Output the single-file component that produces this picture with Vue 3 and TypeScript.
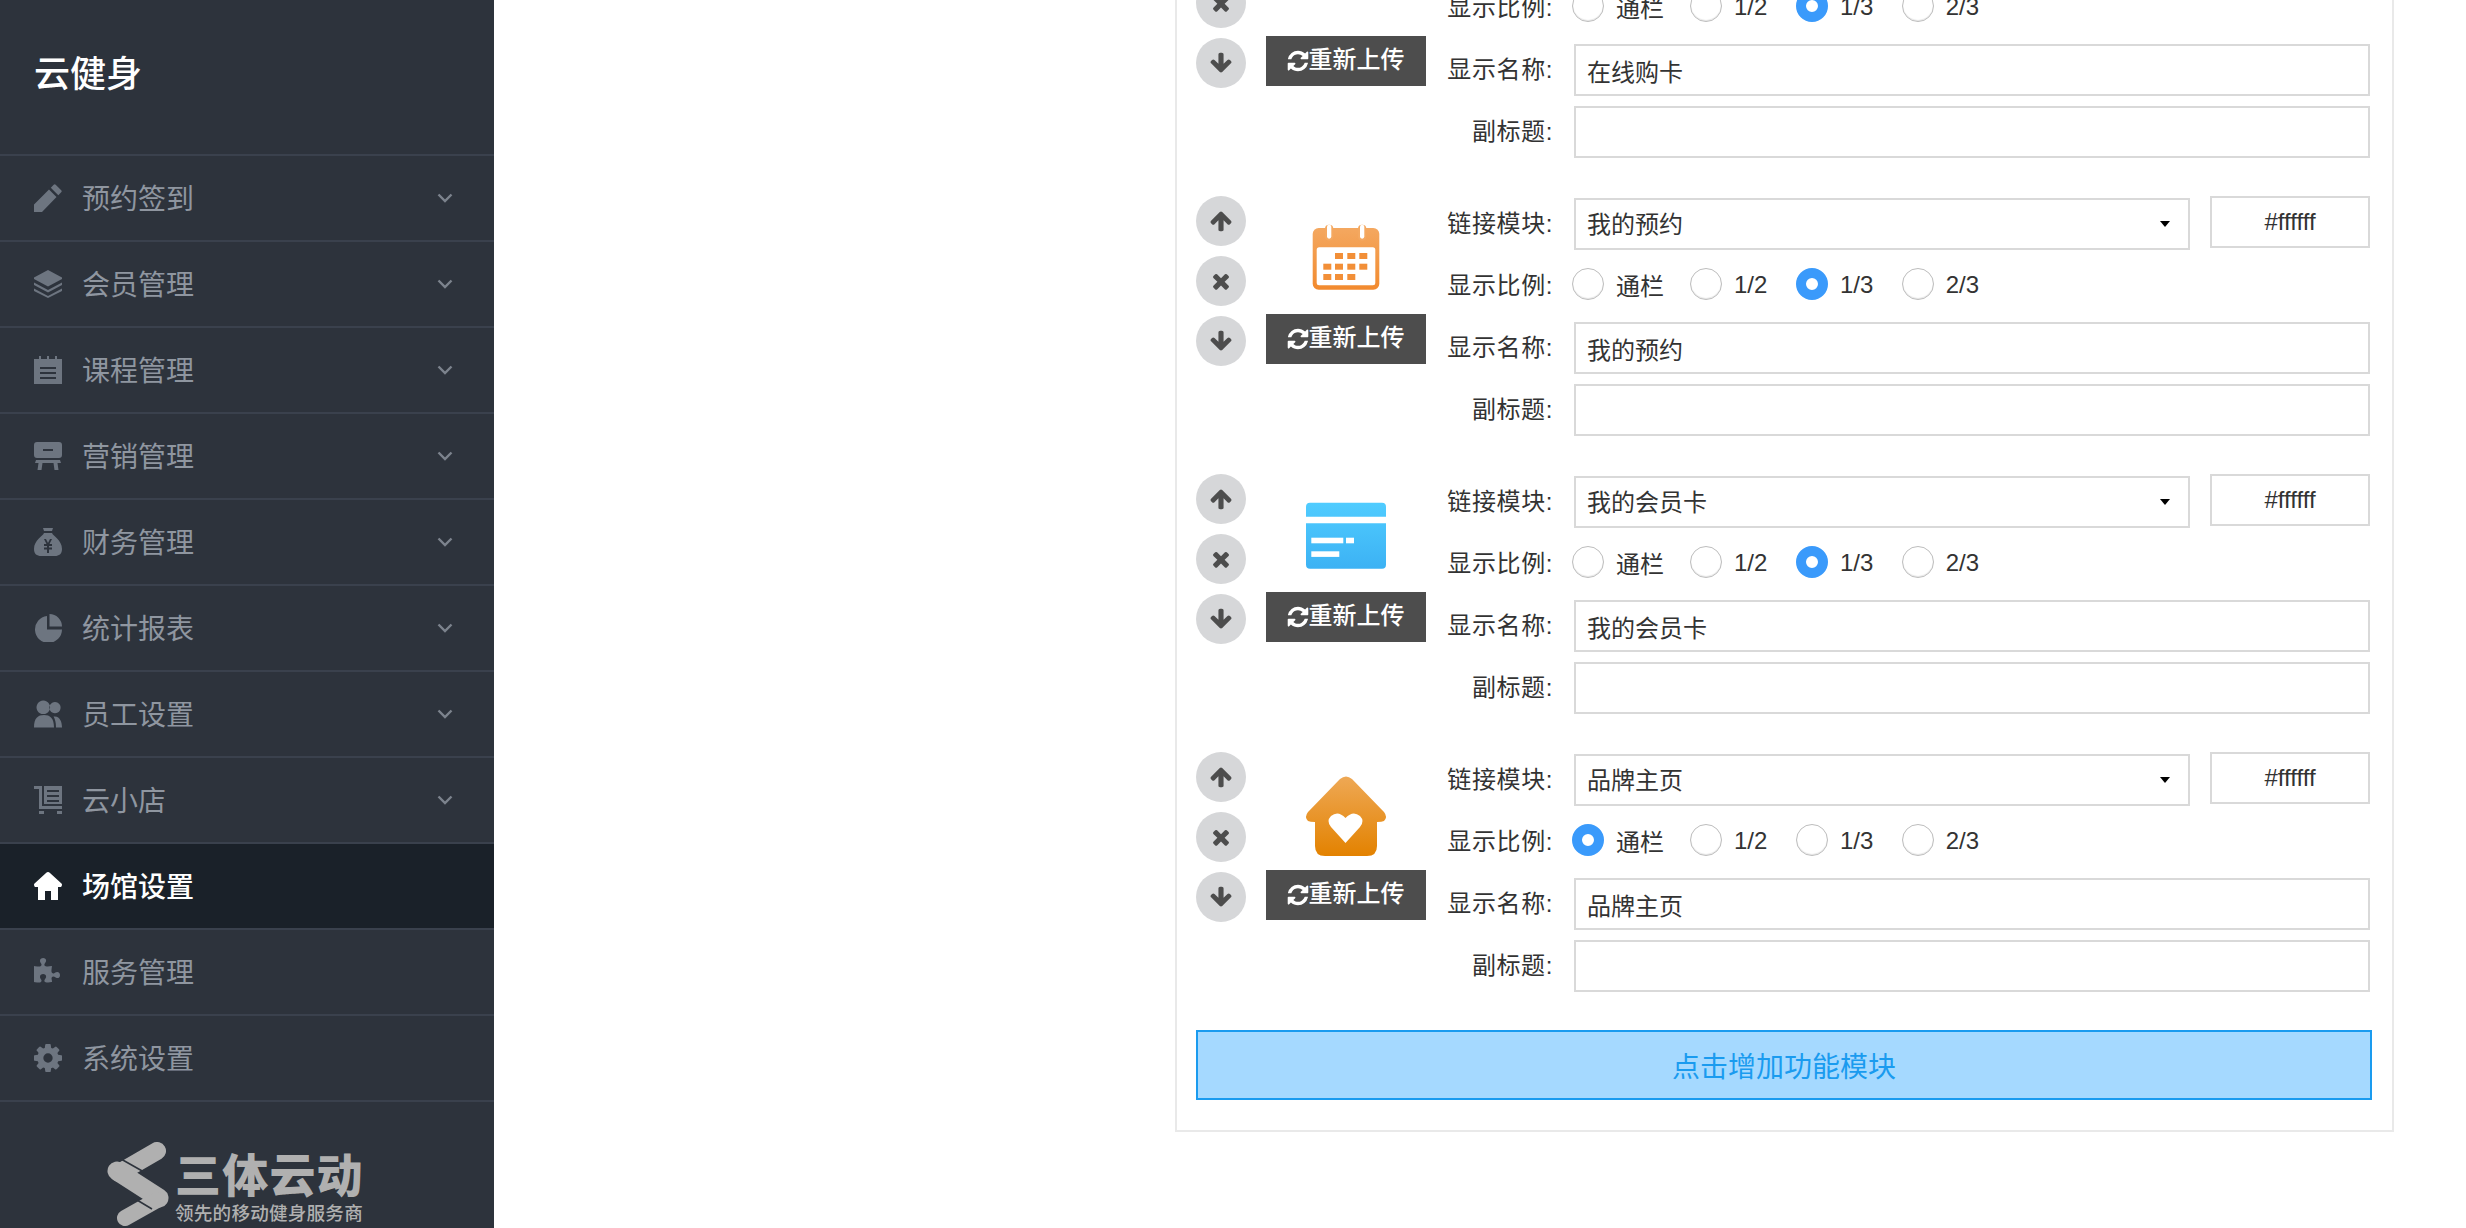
<script setup lang="ts">
interface MenuItem {
  label: string
  d: string
  box?: string
  active?: boolean
  noArrow?: boolean
}
interface ModuleRow {
  id: number
  icon: 'tablet' | 'calendar' | 'card' | 'home'
  link: string
  ratio: string
  name: string
}

const FA = '0 0 1792 1792'
const menu: MenuItem[] = [
  { label: '预约签到', d: 'M0 28V20.5L15 5.5l7.5 7.5L8 28ZM16.8 3.7l2.9-2.9q1-1 2 0l5.5 5.5q1 1 0 2l-2.9 2.9Z' },
  { label: '会员管理', d: 'M14 0L28 7.5V9L14 16.5 0 9V7.5ZM0 12.5l14 7.5 14-7.5V15L14 22.5 0 15ZM0 18.5l14 7.5 14-7.5V21L14 28 0 21Z' },
  { label: '课程管理', d: 'M0 3H5V0H7V3H13V0H15V3H21V0H23V3H28V28H0ZM6 11V13H22V11ZM6 16V18H22V16ZM6 21V23H22V21Z' },
  { label: '营销管理', d: 'M3 0H25Q28 0 28 3V13Q28 16 25 16H3Q0 16 0 13V3Q0 0 3 0ZM9 7V9H19V7ZM2 18H26L27 21H23.5L24.5 28H20.5L19.5 21H8.5L7.5 28H3.5L4.5 21H1Z' },
  { label: '财务管理', d: 'M9 0H19L18 3H10ZM10 5H18C19 8 28 12 28 21C28 26 25 28 21 28H7C3 28 0 26 0 21C0 12 9 8 10 5ZM10 11L12.5 16H10V18H13V19.5H10V21.5H13V25H15V21.5H18V19.5H15V18H18V16H15.5L18 11H16L14 15 12 11Z' },
  { label: '统计报表', d: 'M13 2A13.5 13.5 0 1 0 28 15.5H13ZM15.5 0A12.5 12.5 0 0 1 28 12.5H15.5Z' },
  { label: '员工设置', d: 'M9.3 0.5a6.8 6.8 0 1 1-.01 0ZM21 2a5.6 5.6 0 1 1-.01 0ZM0 27.5C0 18 4 15 10 15C16 15 20 18 20 27.5ZM22 27.5C22 22 21 19 19.5 16.5C26 15.5 28 22 28 27.5Z' },
  { label: '云小店', d: 'M0 0H8V20H28V23H5V3H0ZM10 0H28V18H10ZM13 4V6H25V4ZM13 9V11H25V9ZM13 14V16H25V14ZM5 25H10V28H5ZM23 25H28V28H23Z' },
  { label: '场馆设置', active: true, noArrow: true, d: 'M14 0Q15 0 16 1L28 12Q28 15 27 15H24V28H17V19H11V28H4V15H1Q0 15 0 12L12 1Q13 0 14 0Z' },
  { label: '服务管理', noArrow: true, box: '0 128 1792 1536', d: 'M1664 1098q0 81-44.5 135t-123.5 54q-41 0-77.5-17.5t-59-38-56.5-38-71-17.5q-110 0-110 124 0 39 16 115t15 115v5q-22 0-33 1-34 3-97.5 11.5t-115.5 13.5-98 5q-61 0-103-26.5t-42-83.5q0-37 17.5-71t38-56.5 38-59 17.5-77.5q0-79-54-123.5t-135-44.5q-84 0-143 45.5t-59 127.5q0 43 15 83t33.5 64.5 33.5 53 15 50.5q0 45-46 89-37 35-117 35-95 0-245-24-9-2-27.5-4t-27.5-4l-13-2q-1 0-3-1-2 0-2-1v-1024q2 1 17.5 3.5t34 5 21.5 3.5q150 24 245 24 80 0 117-35 46-44 46-89 0-22-15-50.5t-33.5-53-33.5-64.5-15-83q0-82 59-127.5t144-45.5q80 0 134 44.5t54 123.5q0 41-17.5 77.5t-38 59-38 56.5-17.5 71q0 57 42 83.5t103 26.5q64 0 180-15t163-17v2q-1 2-3.5 17.5t-5 34-3.5 21.5q-24 150-24 245 0 80 35 117 44 46 89 46 22 0 50.5-15t53-33.5 64.5-33.5 83-15q82 0 127.5 59t45.5 143z' },
  { label: '系统设置', noArrow: true, box: '128 128 1536 1536', d: 'M1152 896q0-106-75-181t-181-75-181 75-75 181 75 181 181 75 181-75 75-181zm512-109v222q0 12-8 23t-20 13l-185 28q-19 54-39 91 35 50 107 138 10 12 10 25t-9 23q-27 37-99 108t-94 71q-12 0-26-9l-138-108q-44 23-91 38-16 136-29 186-7 28-36 28h-222q-14 0-24.5-8.5t-11.5-21.5l-28-184q-49-16-90-37l-141 107q-10 9-25 9-14 0-25-11-126-114-165-168-7-10-7-23 0-12 8-23 15-21 51-66.5t54-70.5q-27-50-41-99l-183-27q-13-2-21-12.5t-8-23.5v-222q0-12 8-23t19-13l186-28q14-46 39-92-40-57-107-138-10-12-10-24 0-10 9-23 26-36 98.5-107.5t94.5-71.5q13 0 26 10l138 107q44-23 91-38 16-136 29-186 7-28 36-28h222q14 0 24.5 8.5t11.5 21.5l28 184q49 16 90 37l142-107q9-9 24-9 13 0 25 10 129 119 165 170 7 8 7 22 0 12-8 23-15 21-51 66.5t-54 70.5q26 50 41 98l183 28q13 2 21 12.5t8 23.5z' }
]

const ratios = ['通栏', '1/2', '1/3', '2/3']
const links = ['在线购卡', '我的预约', '我的会员卡', '品牌主页']
const rows: ModuleRow[] = [
  { id: 1, icon: 'tablet', link: '在线购卡', ratio: '1/3', name: '在线购卡' },
  { id: 2, icon: 'calendar', link: '我的预约', ratio: '1/3', name: '我的预约' },
  { id: 3, icon: 'card', link: '我的会员卡', ratio: '1/3', name: '我的会员卡' },
  { id: 4, icon: 'home', link: '品牌主页', ratio: '通栏', name: '品牌主页' }
]

const controls = [
  { key: 'up', d: 'M1675 971q0 51-37 90l-75 75q-38 38-91 38-54 0-90-38l-294-293v704q0 52-37.5 84.5t-90.5 32.5h-128q-53 0-90.5-32.5t-37.5-84.5v-704l-294 293q-36 38-90 38t-90-38l-75-75q-38-38-38-90 0-53 38-91l651-651q35-37 90-37 54 0 91 37l651 651q37 39 37 91z' },
  { key: 'del', d: 'M1490 1322q0 40-28 68l-136 136q-28 28-68 28t-68-28l-294-294-294 294q-28 28-68 28t-68-28l-136-136q-28-28-28-68t28-68l294-294-294-294q-28-28-28-68t28-68l136-136q28-28 68-28t68 28l294 294 294-294q28-28 68-28t68 28l136 136q28 28 28 68t-28 68l-294 294 294 294q28 28 28 68z' },
  { key: 'down', d: 'M1675 832q0 53-37 90l-651 652q-39 37-91 37-53 0-90-37l-651-652q-38-36-38-90 0-53 38-91l74-75q39-37 91-37 53 0 90 37l294 294v-704q0-52 38-90t90-38h128q52 0 90 38t38 90v704l294-294q37-37 90-37 52 0 91 37l75 75q37 39 37 91z' }
]
const refreshPath = 'M1639 1056q0 5-1 7-64 268-268 434.5t-478 166.5q-146 0-282.5-55t-243.5-157l-129 129q-19 19-45 19t-45-19-19-45v-448q0-26 19-45t45-19h448q26 0 45 19t19 45-19 45l-137 137q71 66 161 102t187 36q134 0 250-65t186-179q11-17 53-117 8-23 30-23h192q13 0 22.5 9.5t9.5 22.5zm25-800v448q0 26-19 45t-45 19h-448q-26 0-45-19t-19-45 19-45l138-138q-148-137-349-137-134 0-250 65t-186 179q-11 17-53 117-8 23-30 23h-199q-13 0-22.5-9.5t-9.5-22.5v-7q65-268 270-434.5t480-166.5q146 0 284 55.5t245 156.5l130-129q19-19 45-19t45 19 19 45z'

const calendarCells: [number, number][] = [
  [29, 33], [41.3, 33], [53.3, 33],
  [17.3, 43.7], [29, 43.7], [41.3, 43.7], [53.3, 43.7],
  [17.3, 54], [29, 54], [41.3, 54]
]
</script>

<template>
  <div class="page">
    <aside class="sidebar">
      <div class="brand">云健身</div>
      <nav class="menu">
        <a v-for="item in menu" :key="item.label" class="menu-item" :class="{ active: item.active }">
          <svg class="menu-icon" :viewBox="item.box || '0 0 28 28'">
            <path :d="item.d" fill-rule="evenodd" />
          </svg>
          <span class="menu-label">{{ item.label }}</span>
          <svg v-if="!item.noArrow" class="chevron" viewBox="0 0 16 10">
            <path d="M1.5 1.5L8 8l6.5-6.5" />
          </svg>
        </a>
      </nav>
      <div class="logo">
        <svg class="logo-mark" viewBox="0 0 64 84">
          <g fill="none" stroke="#b0b0b0" stroke-linecap="round">
            <path d="M51 9L13 31" stroke-width="18" />
            <path d="M11 29L53 56" stroke-width="19" />
            <path d="M51 58L19 76" stroke-width="16" />
          </g>
          <path d="M15 17L38 30M26 55L46 67" fill="none" stroke="#2d333c" stroke-width="1.6" />
        </svg>
        <div class="logo-text">
          <div class="logo-name">三体云动</div>
          <div class="logo-slogan">领先的移动健身服务商</div>
        </div>
      </div>
    </aside>

    <main class="main">
      <section class="card">
        <div v-for="row in rows" :key="row.id" class="module">
          <div class="controls">
            <button v-for="c in controls" :key="c.key" class="round-btn" type="button">
              <svg :viewBox="FA"><path :d="c.d" /></svg>
            </button>
          </div>

          <div class="media">
            <div class="thumb">
              <svg v-if="row.icon === 'tablet'" viewBox="0 0 80 80">
                <rect x="2" y="-30" width="54" height="52" rx="6" fill="#3fb8f5" />
                <rect x="8" y="-20" width="42" height="30" rx="1" fill="#fff" />
                <circle cx="29" cy="16" r="3.4" fill="#fff" />
              </svg>
              <svg v-else-if="row.icon === 'calendar'" viewBox="0 0 80 80">
                <defs>
                  <linearGradient id="calGrad" x1="0" y1="0" x2="0" y2="1">
                    <stop offset="0" stop-color="#f4a860" />
                    <stop offset="1" stop-color="#f28a2e" />
                  </linearGradient>
                </defs>
                <rect x="6.7" y="8" width="66.6" height="61.7" rx="6" fill="url(#calGrad)" />
                <rect x="10.7" y="27.3" width="58.6" height="38" rx="2.5" fill="#fff" />
                <rect x="19" y="4.7" width="8.3" height="16" rx="4.1" fill="#f4a860" />
                <rect x="21" y="4.7" width="4.3" height="14" rx="2.1" fill="#fff" />
                <rect x="52" y="4.7" width="8.3" height="16" rx="4.1" fill="#f4a860" />
                <rect x="54" y="4.7" width="4.3" height="14" rx="2.1" fill="#fff" />
                <rect v-for="c in calendarCells" :key="c.join('-')" :x="c[0]" :y="c[1]" width="8" height="6" fill="#f28f38" />
              </svg>
              <svg v-else-if="row.icon === 'card'" viewBox="0 0 80 80">
                <defs>
                  <linearGradient id="cardGrad" gradientUnits="userSpaceOnUse" x1="0" y1="4.7" x2="0" y2="70.7">
                    <stop offset="0" stop-color="#50ccff" />
                    <stop offset="1" stop-color="#3cb2f4" />
                  </linearGradient>
                </defs>
                <path d="M4 4.7H76Q80 4.7 80 8.7V18.7H0V8.7Q0 4.7 4 4.7Z" fill="url(#cardGrad)" />
                <path d="M0 25.3H80V66.7Q80 70.7 76 70.7H4Q0 70.7 0 66.7Z" fill="url(#cardGrad)" />
                <rect x="5.3" y="39.7" width="32" height="5.6" fill="#fff" />
                <rect x="40" y="39.7" width="8" height="5.6" fill="#fff" />
                <rect x="5.3" y="53.3" width="28" height="5.6" fill="#fff" />
              </svg>
              <svg v-else viewBox="0 0 80 80">
                <defs>
                  <linearGradient id="homeGrad" x1="0" y1="0" x2="0" y2="1">
                    <stop offset="0" stop-color="#eea855" />
                    <stop offset="1" stop-color="#e38200" />
                  </linearGradient>
                </defs>
                <path d="M34 3Q40 -2 46 3L78 36Q82 41 78 45Q76 46 71 46V70Q71 80 61 80H19Q9 80 9 70V46Q4 46 2 45Q-2 41 2 36Z" fill="url(#homeGrad)" />
                <path d="M39.5 67L25 51Q20 45 25 40Q32 34 39.5 42Q47 34 54 40Q59 45 54 51Z" fill="#fff" />
              </svg>
            </div>
            <button class="upload" type="button">
              <svg :viewBox="FA"><path :d="refreshPath" /></svg>
              <span>重新上传</span>
            </button>
          </div>

          <div class="form">
            <div class="field first">
              <label class="label">链接模块:</label>
              <div class="select-wrap">
                <select class="control select" :value="row.link">
                  <option v-for="l in links" :key="l" :value="l">{{ l }}</option>
                </select>
              </div>
              <input class="control color" value="#ffffff" />
            </div>
            <div class="field ratio-field">
              <label class="label">显示比例:</label>
              <div class="ratios">
                <label v-for="r in ratios" :key="r" class="ratio">
                  <input type="radio" :name="'ratio' + row.id" :value="r" :checked="r === row.ratio" />
                  <span>{{ r }}</span>
                </label>
              </div>
            </div>
            <div class="field">
              <label class="label">显示名称:</label>
              <input class="control wide" :value="row.name" />
            </div>
            <div class="field">
              <label class="label">副标题:</label>
              <input class="control wide" value="" />
            </div>
          </div>
        </div>

        <button class="add" type="button">点击增加功能模块</button>
      </section>
    </main>
  </div>
</template>

<style scoped>
.page {
  display: flex;
  height: 1228px;
  overflow: hidden;
  background: #fff;
  font-family: "Liberation Sans", "Noto Sans CJK SC", sans-serif;
  color: #333;
}

/* sidebar */
.sidebar {
  flex: 0 0 494px;
  height: 1228px;
  background: #2d333c;
  overflow: hidden;
}
.brand {
  height: 154px;
  padding: 53px 0 0 34px;
  box-sizing: border-box;
  font-size: 36px;
  line-height: 44px;
  font-weight: 500;
  color: #fff;
}
.menu {
  border-top: 2px solid #3a414d;
}
.menu-item {
  display: flex;
  align-items: center;
  height: 84px;
  padding: 0 34px;
  border-bottom: 2px solid #3a414d;
  color: #8f96a0;
  font-size: 28px;
}
.menu-item.active {
  background: #1a2129;
  color: #fff;
  font-weight: 500;
}
.menu-icon {
  flex: 0 0 28px;
  width: 28px;
  height: 28px;
  fill: #6d7580;
}
.active .menu-icon {
  fill: #fff;
}
.menu-label {
  margin-left: 20px;
  flex: 1;
  padding-top: 3px;
  line-height: 40px;
}
.chevron {
  width: 16px;
  height: 10px;
  margin-right: 7px;
  fill: none;
  stroke: #7c838d;
  stroke-width: 2.4;
}
.logo {
  display: flex;
  gap: 5px;
  padding: 40px 0 0 106px;
}
.logo-mark {
  flex: 0 0 64px;
  width: 64px;
  height: 84px;
}
.logo-text {
  padding-top: 7px;
  color: #b0b0b0;
}
.logo-name {
  font-size: 46px;
  line-height: 54px;
  font-weight: 900;
  white-space: nowrap;
  letter-spacing: 1.2px;
}
.logo-slogan {
  font-size: 18.6px;
  line-height: 21px;
  font-weight: 500;
  white-space: nowrap;
  letter-spacing: 0.2px;
}

/* content */
.main {
  flex: 1;
  padding-left: 681px;
  min-width: 0;
}
.card {
  width: 1219px;
  box-sizing: border-box;
  margin-top: -120px;
  padding: 36px 20px 30px 19px;
  border: 2px solid #e9e9e9;
}
.module {
  display: flex;
  height: 240px;
  margin-bottom: 38px;
}
.controls {
  flex: 0 0 50px;
  display: flex;
  flex-direction: column;
  gap: 10px;
}
.round-btn {
  display: flex;
  align-items: center;
  justify-content: center;
  width: 50px;
  height: 50px;
  padding: 0;
  border: 0;
  border-radius: 50%;
  background: #d6d7d9;
}
.round-btn svg {
  width: 24px;
  height: 24px;
  fill: #4d4d4d;
}
.media {
  flex: 0 0 160px;
  margin-left: 20px;
  padding-top: 24px;
}
.thumb {
  width: 80px;
  height: 80px;
  margin: 0 auto 14px;
}
.thumb svg {
  display: block;
  width: 80px;
  height: 80px;
  overflow: visible;
}
.upload {
  display: flex;
  align-items: center;
  justify-content: center;
  width: 160px;
  height: 50px;
  padding: 0 2px 3px 0;
  border: 0;
  background: #4d4d4d;
  color: #fff;
  font: 500 24px/30px "Liberation Sans", "Noto Sans CJK SC", sans-serif;
}
.upload svg {
  width: 24px;
  height: 24px;
  fill: #fff;
  margin-right: -1px;
  margin-top: 3px;
}
.form {
  flex: 1;
  display: flex;
  flex-direction: column;
  gap: 10px;
  min-width: 0;
}
.field {
  display: flex;
  align-items: center;
  height: 52px;
  padding-right: 2px;
}
.field.first {
  height: 54px;
  align-items: flex-end;
}
.label {
  flex: 0 0 127px;
  height: 52px;
  line-height: 52px;
  text-align: right;
  font-size: 24px;
  letter-spacing: 0.6px;
  color: #333;
  white-space: nowrap;
}
.control {
  box-sizing: border-box;
  height: 52px;
  margin: 0;
  padding: 0 11px;
  border: 2px solid #d9d9d9;
  border-radius: 0;
  outline: none;
  background: #fff;
  color: #333;
  font: 24px "Liberation Sans", "Noto Sans CJK SC", sans-serif;
}
.wide {
  flex: 1;
  min-width: 0;
  margin-left: 21px;
}
.select-wrap {
  position: relative;
  flex: 1;
  margin-left: 21px;
  height: 52px;
}
.select-wrap::after {
  content: "";
  position: absolute;
  right: 20px;
  top: 23px;
  border-style: solid;
  border-width: 6px 5.5px 0;
  border-color: #000 transparent transparent;
}
.select {
  width: 100%;
  appearance: none;
  -webkit-appearance: none;
}
.color {
  flex: 0 0 160px;
  width: 160px;
  margin-left: 20px;
  align-self: flex-start;
  text-align: center;
}
.ratio-field {
  align-items: flex-start;
}
.ratios {
  display: flex;
  gap: 28.5px;
  margin-left: 19px;
  padding-top: 8px;
}
.ratio {
  display: flex;
  align-items: center;
  gap: 12px;
  font-size: 24px;
  height: 32px;
  color: #333;
}
.ratio:first-child {
  margin-right: -2.5px;
}
.ratio span {
  padding-top: 2px;
}
.ratio:first-child span {
  padding-top: 0;
}
.ratio input {
  appearance: none;
  -webkit-appearance: none;
  box-sizing: border-box;
  width: 32px;
  height: 32px;
  margin: 0;
  border: 1px solid #bdbdbd;
  border-radius: 50%;
  background: #fff;
  box-shadow: inset 0 -1px 1px rgba(0, 0, 0, 0.1);
}
.ratio input:checked {
  border: 10px solid #3a9afb;
  background: #fff;
  box-shadow: none;
}
.add {
  display: block;
  width: 1176px;
  height: 70px;
  margin: 0;
  padding: 0;
  border: 2px solid #1a9bef;
  background: #a5d9ff;
  color: #1a9bef;
  font: 28px "Liberation Sans", "Noto Sans CJK SC", sans-serif;
}
</style>

<style>
html,
body {
  margin: 0;
  padding: 0;
  background: #fff;
  overflow: hidden;
}
</style>
